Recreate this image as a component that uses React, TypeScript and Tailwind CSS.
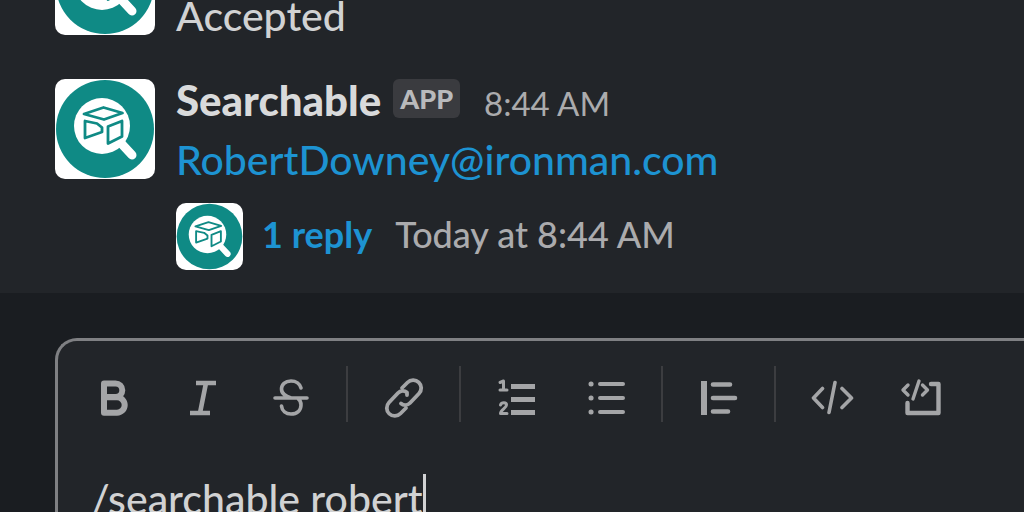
import { useState, type ReactNode } from 'react'

type MessageProps = {
  time?: string
  children: ReactNode
}

const AppLogo = ({ className }: { className: string }) => (
  <svg viewBox="0 0 100 100" className={className} aria-hidden="true">
    <rect width="100" height="100" fill="#fff" />
    <circle cx="50" cy="50" r="49" fill="#0f8a85" />
    <circle cx="47" cy="47" r="28" fill="#fff" />
    <path d="M64 62l13 14" stroke="#fff" strokeWidth="9" strokeLinecap="round" />
    <g fill="none" stroke="#0f8a85" strokeWidth="2.8" strokeLinejoin="round">
      <path d="M29 35l19.500-6.500 19 5.500-18.500 6.500z" />
      <path d="M30 42l12 2.500 5 4v4.500l-17 6z" />
      <path d="M67 42l-14 5.500v17l14-7z" />
    </g>
  </svg>
)

const Message = ({ time, children }: MessageProps) => (
  <article className="flex gap-[21px]">
    <AppLogo className="mt-[11px] size-[100px] shrink-0 rounded-[10px]" />
    <div className="min-w-0 leading-[61px]">
      <div className="flex h-[61px] items-baseline leading-[64px]">
        {time && (
          <>
            <span className="text-[42px] font-black text-[#d9dadb]">
              Searchable
            </span>
            <span className="ml-3 h-[39px] self-center rounded-md bg-[#3a3b3f] px-[7px] text-[27px] leading-[40px] font-black text-[#b9babc]">
              APP
            </span>
            <time className="ml-6 text-[33px] text-[#ababad]">{time}</time>
          </>
        )}
      </div>
      {children}
    </div>
  </article>
)

const Icon = ({ children }: { children: ReactNode }) => (
  <svg
    viewBox="0 0 44 44"
    className="size-11"
    fill="none"
    stroke="currentColor"
    strokeWidth="3"
    strokeLinecap="round"
    strokeLinejoin="round"
    aria-hidden="true"
  >
    {children}
  </svg>
)

const toolGroups = [
  [
    {
      label: 'Bold',
      icon: (
        <g strokeWidth="6">
          <path d="M13 7.500h11.500a6.800 6.800 0 0 1 0 13.600h-11.500z" />
          <path d="M13 21.300h13a7.700 7.700 0 0 1 0 15.400h-13z" />
        </g>
      ),
    },
    {
      label: 'Italic',
      icon: <path strokeWidth="4.600" strokeLinecap="butt" d="M16 7h20M10 37h20M26 7l-6 30" />,
    },
    {
      label: 'Strikethrough',
      icon: (
        <path strokeWidth="3.600" d="M6 22h32M32 12c-1-4-5-7-10-7-6 0-9.500 3.500-9.500 8 0 5 4 7 9.500 9M12.500 30c.5 5 4.500 8 9.500 8 6 0 10-3.500 10-9 0-3-1-5-3-6.500" />
      ),
    },
  ],
  [
    {
      label: 'Link',
      icon: (
        <g strokeWidth="3.800">
          <path d="M20 12l5.500-5.500a7.600 7.600 0 0 1 11.500 11l-9 9.500a6.600 6.600 0 0 1-9 .5" />
          <path d="M24 32l-5.500 5.500a7.600 7.600 0 0 1-11.500-11l9-9.500a6.600 6.600 0 0 1 9-.5v2.500" />
        </g>
      ),
    },
  ],
  [
    {
      label: 'Ordered list',
      icon: (
        <>
          <path strokeWidth="5" strokeLinecap="butt" d="M16 10.500h24M16 23.500h24M16 36.500h24" />
          <path
            strokeWidth="3"
            d="M5 6.500l3.500-1.500v9M5 14h7M5.500 29c1-3 6-3 6 0 0 3-6 5-6 8.500h6.500"
          />
        </>
      ),
    },
    {
      label: 'Bulleted list',
      icon: (
        <>
          <path strokeWidth="4" d="M16 8h23M16 22h23M16 36h23" />
          <path strokeWidth="5" d="M7 8h.1M7 22h.1M7 36h.1" />
        </>
      ),
    },
  ],
  [
    {
      label: 'Blockquote',
      icon: (
        <>
          <path strokeWidth="6" strokeLinecap="butt" d="M7 5v34" />
          <path strokeWidth="4.600" d="M16 8.500h17M16 22h22M16 35.500h15" />
        </>
      ),
    },
  ],
  [
    {
      label: 'Code',
      icon: (
        <path strokeWidth="3.600" d="M12.500 12.500L3.500 22l9 9.500M32 12.500l9.500 9.500-9.500 9.500M25 6.500l-6 30" />
      ),
    },
    {
      label: 'Code block',
      icon: (
        <>
          <path strokeWidth="3.400" d="M9 9l-5 5 5 5M23.500 9l5 5-5 5M20 5l-6 18" />
          <path strokeWidth="4.400" d="M32 8h7.500v29h-31V27" />
        </>
      ),
    },
  ],
]

export default function App() {
  const [draft, setDraft] = useState('/searchable robert')

  return (
    <main className="flex h-screen flex-col overflow-hidden bg-[#1a1d21] font-[Lato,sans-serif]">
      <section className="flex min-h-0 flex-1 flex-col justify-end gap-[22px] overflow-hidden bg-[#222529] pb-[23px] pl-[55px]">
        <Message>
          <p className="text-[41px] font-medium text-[#d1d2d3]">Accepted</p>
        </Message>
        <Message time="8:44 AM">
          <p className="text-[41px] font-medium">
            <a href="mailto:RobertDowney@ironman.com" className="text-[#1d93d2]">
              RobertDowney@ironman.com
            </a>
          </p>
          <div className="mt-[13px] flex items-start text-[36px] leading-[62px]">
            <AppLogo className="size-[67px] rounded-[10px]" />
            <button type="button" className="ml-[19px] font-bold text-[#1d93d2]">
              1 reply
            </button>
            <span className="ml-[23px] font-medium text-[#ababad]">
              Today at 8:44 AM
            </span>
          </div>
        </Message>
      </section>

      <form className="h-[219px] shrink-0 overflow-hidden pt-[45px] pl-[55px]">
        <div className="h-full rounded-tl-[22px] border-t-[3px] border-l-[3px] border-[#7f8083] bg-[#222529] pt-[25px]">
          <div className="ml-[15px] flex h-14 gap-[10px] text-[#a4a5a7]">
            {toolGroups.map((tools, index) => (
              <div key={tools[0].label} className="flex gap-[10px]">
                {index > 0 && <div className="mx-[6px] w-0.5 bg-[#3c3d40]" />}
                {tools.map(({ label, icon }) => (
                  <button
                    key={label}
                    type="button"
                    aria-label={label}
                    className="flex w-[79px] items-center justify-center pt-2"
                  >
                    <Icon>{icon}</Icon>
                  </button>
                ))}
              </div>
            ))}
          </div>
          <div className="mt-[46px] ml-[33px] flex">
            <input
              aria-label="Message"
              value={draft}
              onChange={(event) => setDraft(event.target.value)}
              className="field-sizing-content h-[61px] text-[41px] font-medium text-[#d1d2d3] outline-none"
            />
            <span className="mt-1.5 h-12 w-[3px] bg-[#d1d2d3]" />
          </div>
        </div>
      </form>
    </main>
  )
}
